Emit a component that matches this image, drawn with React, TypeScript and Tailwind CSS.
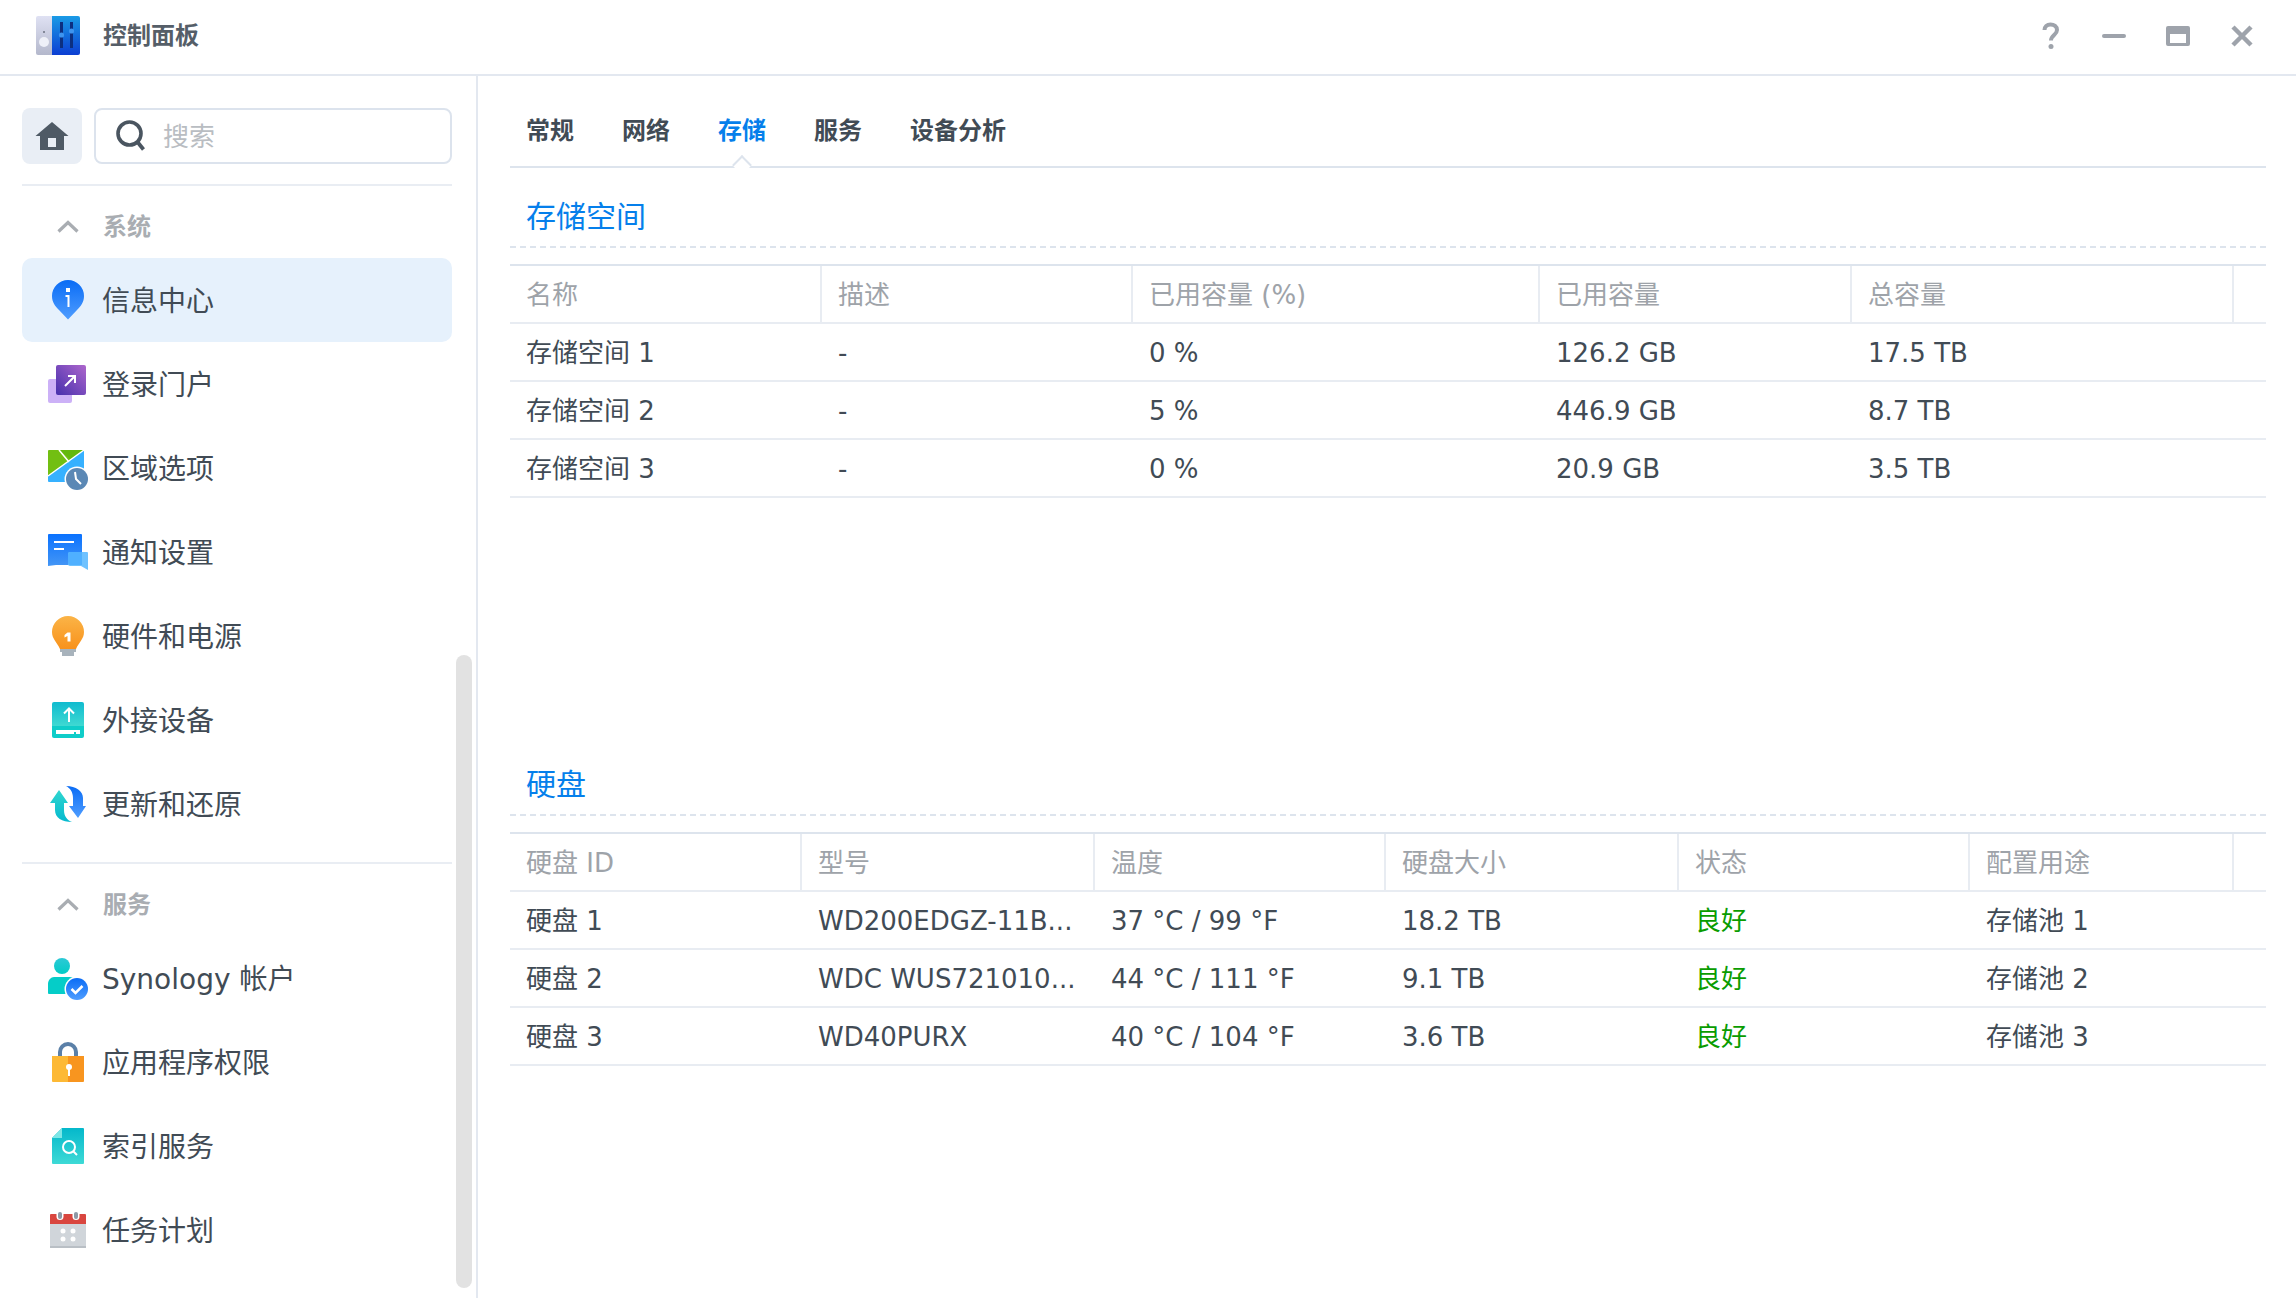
import type { ReactNode } from 'react';

function LogoIcon() {
  return (
    <svg width="44" height="40" viewBox="0 0 44 40">
      <defs>
        <linearGradient id="logoL" x1="0" y1="0" x2="0" y2="1"><stop offset="0" stopColor="#dfe1f3" /><stop offset="1" stopColor="#b4b8cc" /></linearGradient>
        <linearGradient id="logoR" x1="0" y1="0" x2="0" y2="1"><stop offset="0" stopColor="#1a9be6" /><stop offset="1" stopColor="#0c3ed2" /></linearGradient>
      </defs>
      <path d="M2 0H16V39H2a2 2 0 0 1-2-2V2a2 2 0 0 1 2-2Z" fill="url(#logoL)" />
      <path d="M16 0H42a2 2 0 0 1 2 2V37a2 2 0 0 1-2 2H16Z" fill="url(#logoR)" />
      <circle cx="8" cy="16" r="1" fill="#6b7080" />
      <circle cx="8" cy="26" r="5" fill="#eef0f8" />
      <rect x="24" y="6" width="3" height="26" fill="#0c2f80" />
      <rect x="34" y="6" width="3" height="26" fill="#0c2f80" />
      <circle cx="25.5" cy="19" r="2.6" fill="#3d94ef" />
      <circle cx="35.5" cy="15" r="2.6" fill="#3d94ef" />
    </svg>
  );
}

function InfoIcon() {
  return (
    <svg width="40" height="40" viewBox="0 0 40 40" className="overflow-visible">
      <defs><linearGradient id="pin" x1="0" y1="0" x2="0" y2="1"><stop offset="0" stopColor="#0a6cf5" /><stop offset="1" stopColor="#4f9dff" /></linearGradient></defs>
      <path d="M20 0a16 16 0 0 1 16 16c0 6-3 10-7 14l-9 9.500-9-9.500c-4-4-7-8-7-14A16 16 0 0 1 20 0Z" fill="url(#pin)" />
      <rect x="18" y="8" width="4" height="4" fill="#fff" />
      <path d="M17.500 15H21.500V27H19.500V17H17.500Z" fill="#fff" />
    </svg>
  );
}

function PortalIcon() {
  return (
    <svg width="40" height="40" viewBox="0 0 40 40" className="overflow-visible">
      <defs><linearGradient id="portal" x1="0" y1="1" x2="1" y2="0"><stop offset="0" stopColor="#4630ad" /><stop offset="1" stopColor="#ad66cc" /></linearGradient></defs>
      <rect x="0" y="15" width="24" height="24" rx="2" fill="#ccb1f7" />
      <rect x="8" y="1" width="30" height="30" rx="2" fill="url(#portal)" />
      <path d="M17 22 27 12M20 12H27V19" fill="none" stroke="#fff" strokeWidth="2" />
    </svg>
  );
}

function RegionIcon() {
  return (
    <svg width="40" height="40" viewBox="0 0 40 40" className="overflow-visible">
      <path d="M1 2H36L0 28V3a1 1 0 0 1 1-1Z" fill="#72bf12" />
      <path d="M12 2H36L23 12Z" fill="#63b80c" />
      <path d="M36 2V33a1 1 0 0 1-1 1H1a1 1 0 0 1-1-1V28Z" fill="#36b1ff" />
      <path d="M0 28 36 2M11 2 21 14" fill="none" stroke="#fff" strokeWidth="1.500" />
      <circle cx="29" cy="31" r="12.500" fill="#fff" />
      <circle cx="29" cy="31" r="11" fill="#5b88b5" />
      <path d="M27 24 28 31 33 36" fill="none" stroke="#fff" strokeWidth="2" />
    </svg>
  );
}

function NoticeIcon() {
  return (
    <svg width="40" height="40" viewBox="0 0 40 40" className="overflow-visible">
      <defs><linearGradient id="notice" x1="0" y1="0" x2="0" y2="1"><stop offset="0" stopColor="#0a72ff" /><stop offset="1" stopColor="#4496f5" /></linearGradient></defs>
      <path d="M1 2H33a1 1 0 0 1 1 1V33H8L0 34V3a1 1 0 0 1 1-1Z" fill="url(#notice)" />
      <path d="M6 10H26M6 17H16" stroke="#fff" strokeWidth="2" />
      <path d="M22 20H39a1 1 0 0 1 1 1V38L33 34H22a2 2 0 0 1-2-2V22a2 2 0 0 1 2-2Z" fill="#6fc2ff" />
      <path d="M22 20H34V33H22a2 2 0 0 1-2-2V22a2 2 0 0 1 2-2Z" fill="#4fb0ff" />
    </svg>
  );
}

function BulbIcon() {
  return (
    <svg width="40" height="40" viewBox="0 0 40 40" className="overflow-visible">
      <defs><linearGradient id="bulb" x1="0" y1="0" x2="0" y2="1"><stop offset="0" stopColor="#fbb447" /><stop offset="1" stopColor="#f8921c" /></linearGradient></defs>
      <path d="M20 0a16 16 0 0 1 16 16c0 7-5 10-8 17H12C9 26 4 23 4 16A16 16 0 0 1 20 0Z" fill="url(#bulb)" />
      <path d="M12 33H28V36H26V40H14V36H12Z" fill="#a8b3bc" />
      <path d="M16.500 19 19.500 16.500H22.500V25.500H19.500V20L16.500 21.500Z" fill="#fff" />
    </svg>
  );
}

function ExternalIcon() {
  return (
    <svg width="40" height="40" viewBox="0 0 40 40" className="overflow-visible">
      <defs><linearGradient id="ext" x1="0" y1="0" x2="0" y2="1"><stop offset="0" stopColor="#10bbcf" /><stop offset="1" stopColor="#3fd9d2" /></linearGradient></defs>
      <path d="M6 2H34a2 2 0 0 1 2 2V26H4V4a2 2 0 0 1 2-2Z" fill="url(#ext)" />
      <path d="M4 26H36V36a2 2 0 0 1-2 2H6a2 2 0 0 1-2-2Z" fill="#0fcdc9" />
      <path d="M21 22V9M16 13.500 21 8.500 26 13.500" fill="none" stroke="#fff" strokeWidth="2" />
      <path d="M8 30H32V34H28V32H26V34H8Z" fill="#fff" />
    </svg>
  );
}

function UpdateIcon() {
  return (
    <svg width="40" height="40" viewBox="0 0 40 40" className="overflow-visible">
      <defs>
        <linearGradient id="upL" x1="0" y1="0" x2="0" y2="1"><stop offset="0" stopColor="#2fd6cf" /><stop offset="1" stopColor="#05b9cf" /></linearGradient>
        <linearGradient id="upR" x1="0" y1="0" x2="0" y2="1"><stop offset="0" stopColor="#0a6cf5" /><stop offset="1" stopColor="#4f9dff" /></linearGradient>
      </defs>
      <path d="M11 6 20 19H16V26C16 32 19 36 24 38 14 38 7 34 7 26V19H2Z" fill="url(#upL)" />
      <path d="M18 2C28 2 35 7 35 14V22H38L30 34 21 22H25V14C25 8 22 4 18 2Z" fill="url(#upR)" />
    </svg>
  );
}

function AccountIcon() {
  return (
    <svg width="40" height="40" viewBox="0 0 40 40" className="overflow-visible">
      <defs>
        <linearGradient id="acc" x1="0" y1="0" x2="0" y2="1"><stop offset="0" stopColor="#2cc9d6" /><stop offset="1" stopColor="#02ccc6" /></linearGradient>
        <linearGradient id="accB" x1="0" y1="0" x2="0" y2="1"><stop offset="0" stopColor="#0a6cf5" /><stop offset="1" stopColor="#4f9dff" /></linearGradient>
      </defs>
      <circle cx="14" cy="8" r="8" fill="url(#acc)" />
      <path d="M6 19H22c3 0 6 3 6 7V36H1a1 1 0 0 1-1-1V26c0-4 3-7 6-7Z" fill="#05cdc8" />
      <circle cx="29" cy="31" r="12.500" fill="#fff" />
      <circle cx="29" cy="31" r="11" fill="url(#accB)" />
      <path d="M23.500 31 27.500 35 34.500 28" fill="none" stroke="#fff" strokeWidth="2.500" />
    </svg>
  );
}

function LockIcon() {
  return (
    <svg width="40" height="40" viewBox="0 0 40 40" className="overflow-visible">
      <path d="M10 14V10a10 10 0 0 1 20 0V14H26V10a6 6 0 0 0-12 0V14Z" fill="#5b80a8" />
      <path d="M4 14H20V40H5a1 1 0 0 1-1-1Z" fill="#fdb935" />
      <path d="M20 14H36V39a1 1 0 0 1-1 1H20Z" fill="#f8951f" />
      <circle cx="21" cy="25" r="3" fill="#fff" />
      <rect x="20" y="25" width="2" height="9" fill="#fff" />
    </svg>
  );
}

function IndexIcon() {
  return (
    <svg width="40" height="40" viewBox="0 0 40 40" className="overflow-visible">
      <defs><linearGradient id="idx" x1="0" y1="0" x2="0" y2="1"><stop offset="0" stopColor="#04b8cb" /><stop offset="1" stopColor="#3edad6" /></linearGradient></defs>
      <path d="M14 2H35a1 1 0 0 1 1 1V37a1 1 0 0 1-1 1H5a1 1 0 0 1-1-1V12Z" fill="url(#idx)" />
      <path d="M14 2V12H4Z" fill="#7ee6e6" />
      <circle cx="21" cy="21" r="6" fill="none" stroke="#fff" strokeWidth="2" />
      <path d="M25.500 25.500 29 29" stroke="#fff" strokeWidth="2" />
    </svg>
  );
}

function TaskIcon() {
  return (
    <svg width="40" height="40" viewBox="0 0 40 40" className="overflow-visible">
      <path d="M2 12H38V37a1 1 0 0 1-1 1H3a1 1 0 0 1-1-1Z" fill="#d0d5da" />
      <rect x="2" y="36" width="36" height="2" fill="#b9bfc5" />
      <path d="M3 4H37a1 1 0 0 1 1 1V14H2V5a1 1 0 0 1 1-1Z" fill="#d9463f" />
      <rect x="8.500" y="1" width="7" height="9" rx="3.500" fill="#fff" />
      <rect x="24.500" y="1" width="7" height="9" rx="3.500" fill="#fff" />
      <rect x="10" y="2" width="4" height="7" rx="2" fill="#8d99a6" />
      <rect x="26" y="2" width="4" height="7" rx="2" fill="#8d99a6" />
      <circle cx="15" cy="21" r="2.500" fill="#fff" />
      <circle cx="25" cy="21" r="2.500" fill="#fff" />
      <circle cx="15" cy="29" r="2.500" fill="#fff" />
      <circle cx="25" cy="29" r="2.500" fill="#fff" />
    </svg>
  );
}

function Chevron() {
  return (
    <svg width="22" height="13" viewBox="0 0 22 13" className="ml-[35px] mr-[24px] shrink-0">
      <path d="M1.500 11.500 11 2.500 20.500 11.500" fill="none" stroke="#a9adb2" strokeWidth="3.200" />
    </svg>
  );
}

function SideHeading({ label }: { label: string }) {
  return (
    <div className="h-[72px] pt-[8px] flex items-center">
      <Chevron />
      <span className="pt-[2px] text-[24px] font-bold text-[#a9adb2]">{label}</span>
    </div>
  );
}

function SideItem({ icon, label, active }: { icon: ReactNode; label: string; active?: boolean }) {
  return (
    <div className={`h-[84px] flex items-center pl-[26px] gap-[14px] rounded-[10px] ${active ? 'bg-[#e6f1fc]' : ''}`}>
      <div className="w-[40px] h-[40px] shrink-0">{icon}</div>
      <span className="pt-[4px] text-[28px] text-[#414b55]">{label}</span>
    </div>
  );
}

function SectionTitle({ children }: { children: string }) {
  return (
    <div className="h-[80px] pt-[18px] pl-[16px] flex items-center border-b-2 border-dashed border-[#dde4ed]">
      <span className="text-[30px] text-[#057feb]">{children}</span>
    </div>
  );
}

function DataTable({ grid, headers, rows }: { grid: string; headers: string[]; rows: string[][] }) {
  return (
    <div className="mt-[16px] border-t-2 border-[#dde4ed]">
      <div className={`${grid} h-[58px] border-b-2 border-[#e8ecf2]`}>
        {headers.map(h => (
          <div key={h} className="flex items-center pl-[16px] pt-[2px] border-r-2 border-[#e8ecf2] text-[26px] text-[#9ea3a9]">{h}</div>
        ))}
        <div />
      </div>
      {rows.map(row => (
        <div key={row[0]} className={`${grid} h-[58px] border-b-2 border-[#e8ecf2]`}>
          {row.map((c, i) => (
            <div key={i} className={`flex items-center pl-[16px] pt-[2px] text-[26px] whitespace-nowrap ${c === '良好' ? 'text-[#0a9c00]' : 'text-[#414b55]'}`}>{c}</div>
          ))}
        </div>
      ))}
    </div>
  );
}

const sysItems = [
  { label: '信息中心', icon: <InfoIcon />, active: true },
  { label: '登录门户', icon: <PortalIcon /> },
  { label: '区域选项', icon: <RegionIcon /> },
  { label: '通知设置', icon: <NoticeIcon /> },
  { label: '硬件和电源', icon: <BulbIcon /> },
  { label: '外接设备', icon: <ExternalIcon /> },
  { label: '更新和还原', icon: <UpdateIcon /> },
];

const svcItems = [
  { label: 'Synology 帐户', icon: <AccountIcon /> },
  { label: '应用程序权限', icon: <LockIcon /> },
  { label: '索引服务', icon: <IndexIcon /> },
  { label: '任务计划', icon: <TaskIcon /> },
];

const tabs = ['常规', '网络', '存储', '服务', '设备分析'];

export default function App() {
  return (
    <div className="w-[2296px] h-[1298px] overflow-hidden bg-white flex flex-col font-['DejaVu_Sans','Noto_Sans_CJK_SC',sans-serif]">
      {/* Title bar */}
      <div className="h-[76px] shrink-0 border-b-2 border-[#e3e8f0] flex items-center pl-[36px] pb-[2px]">
        <LogoIcon />
        <span className="ml-[23px] text-[24px] font-bold text-[#555e68]">控制面板</span>
        <div className="ml-auto flex items-center gap-[40px] pr-[44px]">
          <svg width="20" height="28" viewBox="0 0 20 28" className="-translate-x-[1px]">
            <path d="M3.500 8C3.500 4.500 6 2.500 9.500 2.500S16 4.500 16 8c0 5-6 5-6 10.500" fill="none" stroke="#9ea3ab" strokeWidth="4" />
            <circle cx="10" cy="24.500" r="2.500" fill="#9ea3ab" />
          </svg>
          <div className="w-[24px] h-[4px] rounded-full bg-[#9ea3ab]" />
          <svg width="24" height="20" viewBox="0 0 24 20">
            <path d="M2 0H22a2 2 0 0 1 2 2V18a2 2 0 0 1-2 2H2a2 2 0 0 1-2-2V2a2 2 0 0 1 2-2ZM4 8V17H20V8Z" fill="#9ea3ab" fillRule="evenodd" />
          </svg>
          <svg width="22" height="22" viewBox="0 0 22 22" className="translate-x-[1px]">
            <path d="M2 2 20 20M20 2 2 20" stroke="#9ea3ab" strokeWidth="4.500" />
          </svg>
        </div>
      </div>

      <div className="flex-1 flex min-h-0">
        {/* Sidebar */}
        <div className="relative w-[478px] shrink-0 border-r-2 border-[#e3e8f0] pt-[32px] pl-[22px] pr-[24px] overflow-hidden">
          <div className="flex gap-[12px]">
            <div className="w-[60px] h-[56px] rounded-[8px] bg-[#e9eef5] flex items-center justify-center">
              <svg width="34" height="30" viewBox="0 0 34 30">
                <path d="M17 1 33.500 15H29V29H5V15H.5Z" fill="#4f5a65" />
                <rect x="13" y="17" width="8" height="9" fill="#e9eef5" />
              </svg>
            </div>
            <div className="flex-1 h-[56px] rounded-[8px] border-2 border-[#dce3ed] flex items-center pl-[20px]">
              <svg width="30" height="32" viewBox="0 0 30 32" className="shrink-0">
                <circle cx="13.500" cy="13.500" r="11.500" fill="none" stroke="#4a5560" strokeWidth="3.600" />
                <path d="M21.500 22 27.500 29.500" stroke="#4a5560" strokeWidth="3.800" />
              </svg>
              <span className="ml-[17px] pt-[2px] text-[26px] text-[#b9bdc2]">搜索</span>
            </div>
          </div>
          <div className="mt-[20px] border-b-2 border-[#e9edf3]" />
          <SideHeading label="系统" />
          {sysItems.map(it => <SideItem key={it.label} {...it} />)}
          <div className="mt-[16px] border-b-2 border-[#e9edf3]" />
          <SideHeading label="服务" />
          {svcItems.map(it => <SideItem key={it.label} {...it} />)}
          {/* scrollbar */}
          <div className="absolute left-[456px] top-[579px] w-[16px] h-[633px] rounded-full bg-[#e2e2e2]" />
        </div>

        {/* Main */}
        <div className="flex-1 pl-[32px] pr-[30px] min-w-0">
          <div className="relative h-[92px] border-b-2 border-[#dde4ed] flex items-start pt-[38px] pl-[16px] gap-[48px]">
            {tabs.map(t => (
              <span key={t} className={`text-[24px] leading-[34px] font-bold ${t === '存储' ? 'text-[#057feb]' : 'text-[#414b55]'}`}>{t}</span>
            ))}
            <div className="absolute left-[225px] bottom-[-6px] w-[14px] h-[14px] rotate-45 bg-white border-t-2 border-l-2 border-[#dde4ed]" />
          </div>

          <SectionTitle>存储空间</SectionTitle>
          <DataTable
            grid="grid grid-cols-[312px_311px_407px_312px_382px_1fr]"
            headers={['名称', '描述', '已用容量 (%)', '已用容量', '总容量']}
            rows={[
              ['存储空间 1', '-', '0 %', '126.2 GB', '17.5 TB'],
              ['存储空间 2', '-', '5 %', '446.9 GB', '8.7 TB'],
              ['存储空间 3', '-', '0 %', '20.9 GB', '3.5 TB'],
            ]}
          />

          <div className="mt-[238px]">
            <SectionTitle>硬盘</SectionTitle>
          </div>
          <DataTable
            grid="grid grid-cols-[292px_293px_291px_293px_291px_264px_1fr]"
            headers={['硬盘 ID', '型号', '温度', '硬盘大小', '状态', '配置用途']}
            rows={[
              ['硬盘 1', 'WD200EDGZ-11B...', '37 °C / 99 °F', '18.2 TB', '良好', '存储池 1'],
              ['硬盘 2', 'WDC WUS721010...', '44 °C / 111 °F', '9.1 TB', '良好', '存储池 2'],
              ['硬盘 3', 'WD40PURX', '40 °C / 104 °F', '3.6 TB', '良好', '存储池 3'],
            ]}
          />
        </div>
      </div>
    </div>
  );
}
